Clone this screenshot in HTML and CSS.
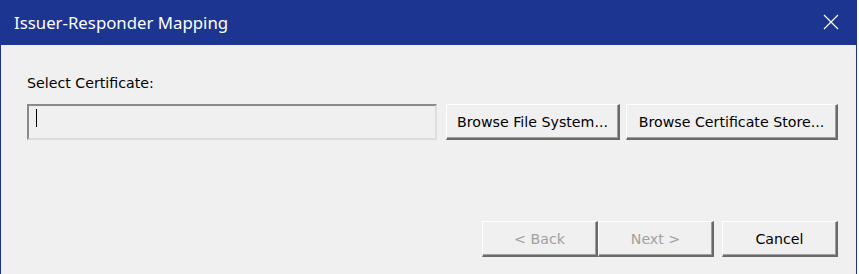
FILE: index.html
```html
<!DOCTYPE html>
<html lang="en">
<head>
    <meta charset="UTF-8">
    <title>Issuer-Responder Mapping</title>
    <link rel="stylesheet" href="styles.css">
</head>
<body>

<div class="janela">

    <!-- Barra de titulo -->
    <div class="titulo">
        <span>Issuer-Responder Mapping</span>
        <svg class="fechar" width="16" height="16" viewBox="0 0 16 16">
            <path d="M1 1 L15 15 M15 1 L1 15" stroke="#ffffff" stroke-width="1.2" fill="none"/>
        </svg>
    </div>

    <!-- Conteudo -->
    <div class="conteudo">
        <label>Select Certificate:</label>

        <div class="linha">
            <div class="campo"><span class="cursor"></span></div>
            <button class="btn-fs">Browse File System...</button>
            <button class="btn-store">Browse Certificate Store...</button>
        </div>
    </div>

    <!-- Rodape -->
    <div class="rodape">
        <button class="btn-nav" disabled>&lt; Back</button>
        <button class="btn-nav" disabled>Next &gt;</button>
        <button class="btn-cancel">Cancel</button>
    </div>
</div>

</body>
</html>
```
FILE: styles.css
```css
body {
    margin: 0;
    background-color: #ffffff;
    font-family: "Noto Sans", "Open Sans", sans-serif;
}
.janela {
    width: 855px;
    height: 274px;
    background-color: #f0f0f0;
    border-left: 1px solid #1b3590;
    border-right: 1px solid #1b3590;
    display: flex;
    flex-direction: column;
}
.titulo {
    height: 45px;
    background-color: #1b3590;
    color: white;
    display: flex;
    align-items: center;
    justify-content: space-between;
    padding: 0 17px 0 13px;
    font-size: 16.8px;
}
.titulo span {
    margin-top: -1px;
}
.fechar {
    margin-top: -1px;
}
.conteudo {
    padding: 0 18px 0 26px;
}
label {
    display: block;
    font-family: "DejaVu Sans", Tahoma, sans-serif;
    font-size: 14.2px;
    color: #000;
    margin-top: 30px;
}
.linha {
    display: flex;
    margin-top: 13px;
}
.campo {
    flex-shrink: 0;
    width: 406px;
    height: 32px;
    border-top: 2px solid #8a8a8a;
    border-left: 2px solid #8a8a8a;
    border-right: 2px solid #dcdcdc;
    border-bottom: 2px solid #dcdcdc;
    background-color: #f0f0f0;
    margin-right: 9px;
    position: relative;
}
.cursor {
    position: absolute;
    left: 7px;
    top: 3px;
    width: 1px;
    height: 18px;
    background-color: #000;
}
button {
    flex-shrink: 0;
    font-family: "DejaVu Sans", Tahoma, sans-serif;
    font-size: 14.2px;
    color: #000;
    background-color: #f0f0f0;
    height: 36px;
    border-top: 1px solid #ffffff;
    border-left: 1px solid #ffffff;
    border-right: 2px solid #696969;
    border-bottom: 2px solid #696969;
    box-shadow: inset -1px -1px 0 #a0a0a0;
    padding: 0;
}
.btn-fs {
    width: 174px;
    margin-right: 6px;
}
.btn-store {
    width: 212px;
}
.rodape {
    display: flex;
    justify-content: flex-end;
    padding: 0 18px 0 0;
    margin-top: 81px;
}
.btn-nav {
    width: 116px;
    color: #a0a0a0;
}
.btn-cancel {
    width: 116px;
    margin-left: 8px;
}
```
